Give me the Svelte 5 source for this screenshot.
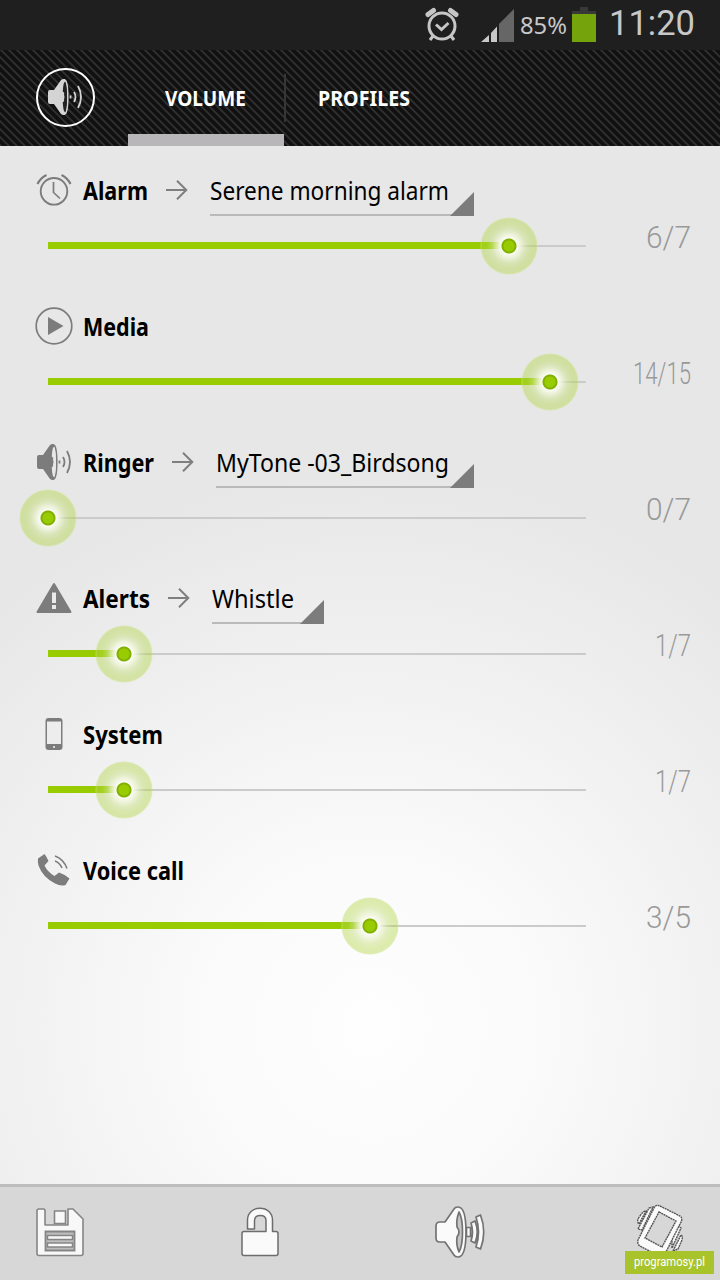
<script>
	const volumes = [
		{ icon: 'alarm', name: 'Alarm', level: 6, max: 7, tone: 'Serene morning alarm', labelWidth: 65, toneWidth: 239, countWidth: 45 },
		{ icon: 'media', name: 'Media', level: 14, max: 15, labelWidth: 66, countWidth: 58 },
		{ icon: 'speaker', name: 'Ringer', level: 0, max: 7, tone: 'MyTone -03_Birdsong', labelWidth: 71, toneWidth: 233, countWidth: 45 },
		{ icon: 'alert', name: 'Alerts', level: 1, max: 7, tone: 'Whistle', labelWidth: 67, toneWidth: 82, countWidth: 36 },
		{ icon: 'phone', name: 'System', level: 1, max: 7, labelWidth: 80, countWidth: 36 },
		{ icon: 'call', name: 'Voice call', level: 3, max: 5, labelWidth: 101, countWidth: 45 }
	];

	const trackWidth = 538;

	let tab = $state('VOLUME');

	function position(v) {
		return Math.floor((v.level / v.max) * trackWidth);
	}
</script>

{#snippet fitted(text, width, height, baseline, cls)}
	<svg class={cls} {width} {height}>
		<text x="0" y={baseline} textLength={width} lengthAdjust="spacingAndGlyphs">{text}</text>
	</svg>
{/snippet}

{#snippet speaker()}
	<path d="M0 13q0-2 2-2h4L13 1q1-1 3-1h1v36h-1q-2 0-3-1L6 25H2q-2 0-2-2z" fill="currentColor" />
	<ellipse cx="16.5" cy="18" rx="3.3" ry="17" fill="none" stroke="currentColor" stroke-width="1.5" />
	<ellipse cx="16.8" cy="18" rx="2.2" ry="15" class="hole" />
	<path d="M13 12c3.500 1 3.500 2 3 3.500q1 2.500 0 5c.5 1.500 0 2.500-3 3.500z" fill="currentColor" />
	<path d="M22.5 16.5v3M26 13q3 5 0 10M30 7q6 11 0 22" fill="none" stroke="currentColor" stroke-width="1.8" />
{/snippet}

{#snippet rowIcon(name)}
	<svg class="icon" width="38" height="38" viewBox="0 0 38 38">
		{#if name === 'alarm'}
			<g fill="none" stroke="currentColor" stroke-width="1.9">
				<circle cx="19" cy="20.3" r="13.3" />
				<path d="M18.5 11v10.5l6.5 6" stroke-width="1.7" />
				<path d="M2.5 13q3-6 9-9M35.500 13q-3-6-9-9" stroke-width="2.2" />
			</g>
		{:else if name === 'media'}
			<circle cx="19" cy="19" r="17.8" fill="none" stroke="currentColor" stroke-width="1.7" />
			<path d="M13 10v18l15.500-9z" fill="currentColor" />
		{:else if name === 'speaker'}
			<g transform="translate(2 1)">{@render speaker()}</g>
		{:else if name === 'alert'}
			<path d="M19 5 35.500 33H2.500z" fill="currentColor" stroke="currentColor" stroke-width="2" stroke-linejoin="round" />
			<path d="M17 13.500h4v10.500h-4zM17 26h4v4h-4z" fill="#eaeaea" />
		{:else if name === 'phone'}
			<rect x="10.5" y="3" width="17" height="32" rx="3" fill="currentColor" />
			<path d="M12 6.500h14V29H12z" fill="#ededed" />
			<circle cx="19" cy="32" r="1.1" fill="#ededed" />
		{:else}
			<path d="M3 7.500 9.500 3q2 2.500 4 7l-4 4.500q3 6.500 10 10.500l4.500-3.500q5 1.500 10.500 6l-4 6.500q-4.500 1.500-10.500-1.500Q7.500 26 3.500 14.500 2.500 11 3 7.500z" fill="currentColor" />
			<path d="M20 10q5 2 7 7M20 5q8.500 3 12 12.500" fill="none" stroke="currentColor" stroke-width="1.5" />
		{/if}
	</svg>
{/snippet}

<div class="screen">
	<div class="status">
		<svg width="34" height="36" viewBox="0 0 34 36" fill="none" stroke="#c6c6c6">
			<circle cx="17" cy="20" r="13" stroke-width="3" />
			<path d="M11 18.500l5.500 5 7-6.500" stroke-width="3" />
			<path d="M3 8.500 8.500 4.500M31 8.500 25.500 4.500" stroke-width="5" stroke-linecap="round" />
			<path d="M8 30l-3 4M26 30l3 4" stroke-width="3" />
		</svg>
		<svg class="signal" width="33" height="33" viewBox="0 0 33 33">
			<path d="M0 33 8 26v7zM10 24l6-6.500V33h-6z" fill="#c8c8c8" />
			<path d="M18 15 33 0v33H18z" fill="#666" />
		</svg>
		{@render fitted('85%', 47, 30, 25, 'percent')}
		<svg class="battery" width="24" height="35" viewBox="0 0 24 35">
			<path d="M8 0h8v4h8v4H0V4h8z" fill="#383838" />
			<path d="M0 7h24v28H0z" fill="#74a30c" />
		</svg>
		{@render fitted('11:20', 86, 44, 33, 'clock')}
	</div>

	<header>
		<div class="logo">
			<svg width="35" height="37" viewBox="0 0 35 37">{@render speaker()}</svg>
		</div>
		<nav>
			<button class:active={tab === 'VOLUME'} onclick={() => (tab = 'VOLUME')}>
				{@render fitted('VOLUME', 81, 30, 22.5, 'tab')}
			</button>
			<span class="divider"></span>
			<button class:active={tab === 'PROFILES'} onclick={() => (tab = 'PROFILES')}>
				{@render fitted('PROFILES', 92, 30, 22.5, 'tab')}
			</button>
		</nav>
	</header>

	<main>
		{#each volumes as v}
			<section>
				<div class="heading">
					{@render rowIcon(v.icon)}
					{@render fitted(v.name, v.labelWidth, 38, 28.5, 'label')}
					{#if v.tone}
						<svg class="arrow" width="22" height="20" viewBox="0 0 22 20" fill="none" stroke="#7f7f7f" stroke-width="2">
							<path d="M0 10h20M11 .8 20.300 10 11 19.200" />
						</svg>
						<div class="tone">
							{@render fitted(v.tone, v.toneWidth, 38, 28.5, 'tone-name')}
							<span class="corner"></span>
						</div>
					{/if}
				</div>
				<div class="control">
					<div class="track">
						<div class="fill" style="width: {position(v)}px"></div>
						<div class="thumb" style="left: {position(v)}px"></div>
					</div>
					{@render fitted(`${v.level}/${v.max}`, v.countWidth, 36, 30, 'count')}
				</div>
			</section>
		{/each}
	</main>

	<footer>
		<svg width="48" height="54" viewBox="0 0 48 54" fill="#f8f8f8" stroke="#858585" stroke-width="1.6">
			<path d="M3 4h4.500q1.500 0 1.500 1.500V20h23V4h5l10 10v34.500q0 2-2 2H3q-2 0-2-2V6q0-2 2-2z" stroke-linejoin="round" />
			<path d="M18.500 6h11v12.500h-11z" />
			<path d="M9.500 26.500h29v19h-29z" fill="#bdbdbd" stroke-width="1.8" />
			<path d="M11.500 30.500h25v4h-25zM11.500 38h25v4h-25z" stroke-width="1.5" />
		</svg>
		<svg width="48" height="54" viewBox="-1 0 48 54" fill="#fafafa" stroke="#6d6d6d" stroke-width="1.5">
			<path d="M11.500 24V15C11.500 8 17 3.200 24 3.200S36.500 8 36.500 15v11.500H40q2 0 2 2V48.500q0 2-2 2H8q-2 0-2-2V28.500q0-2 2-2h22V15.500q0-5-5.700-5T18.500 15.500V24z" stroke-linejoin="round" />
		</svg>
		<svg width="50" height="54" viewBox="0 0 50 54" fill="#fafafa" stroke="#737373" stroke-width="1.7" stroke-linejoin="round">
			<path d="M1 21q0-4 4-4h5L19 4q1-2 4-2 8 0 8 25t-8 25q-3 0-4-2L10 37H5q-4 0-4-4z" />
			<path d="M24 7q-3 8-2 15 4 5 0 10-1 8 2 15 3.500-6 3.500-20T24 7z" fill="#c6c6c6" />
			<path d="M31.500 22.500h4v9h-4zM36 18l4-2q4.500 11 0 22l-4-2q3-9 0-18zM41 12l4.500-2q6.500 17 0 34L41 42q5-15 0-30z" />
		</svg>
		<svg width="48" height="54" viewBox="0 0 48 54" fill="#fafafa" stroke="#555" stroke-width="1.4">
			<g stroke-dasharray="2 .6">
				<path d="M4 11q3-5 6-5L3 19q-3-3 1-8zM13 3l4-1L6 25l-4-1zM37 46l8-16q2 1 1 5l-4 9zM36 33l6-12 3 2-9 20z" />
				<path d="M24 1 44 11q3 2 1 6L29 49q-2 4-6 2L4 41q-3-2-2-6L18 3q2-4 6-2z" />
				<path d="M23 7 40 16 26 42 9 33z" fill="#d7d7d7" />
			</g>
		</svg>
		<div class="badge">{@render fitted('programosy.pl', 71, 23, 15, 'site')}</div>
	</footer>
</div>

<style>
	:global(body) {
		margin: 0;
	}

	.screen {
		display: flex;
		flex-direction: column;
		width: 720px;
		height: 1280px;
		overflow: hidden;
		font-family: "Noto Sans", "Open Sans", sans-serif;
	}

	svg {
		display: block;
		flex: none;
		overflow: visible;
	}

	.status {
		display: flex;
		box-sizing: border-box;
		height: 50px;
		padding: 6px 25px 0 0;
		justify-content: flex-end;
		background: #1f1f1f;
	}

	.signal {
		margin: 3px 6px 0 22px;
	}

	.percent {
		margin-top: 3px;
		fill: #c8c8c8;
		font-size: 24px;
	}

	.battery {
		margin: 1px 13px 0 5px;
	}

	.clock {
		margin-top: -4px;
		fill: #c8c8c8;
		font-family: Roboto, sans-serif;
		font-size: 35px;
	}

	header {
		display: flex;
		height: 96px;
		background: linear-gradient(45deg, #313131 0 5%, #111 10% 40%, #313131 45% 55%, #111 60% 90%, #313131 95%) 1px 0 / 8px 8px;
	}

	.logo {
		display: flex;
		box-sizing: border-box;
		width: 59px;
		height: 59px;
		margin: 18px 33px 0 36px;
		align-items: center;
		justify-content: center;
		border: 2px solid #fff;
		border-radius: 50%;
		color: #d4d4d4;
	}

	.hole {
		fill: #e8e8e8;
	}

	.logo .hole {
		fill: #222;
	}

	nav {
		display: flex;
	}

	button {
		display: flex;
		box-sizing: border-box;
		width: 156px;
		height: 96px;
		padding: 0;
		align-items: center;
		justify-content: center;
		border: 0 solid #b9b6b9;
		background: none;
		font-family: inherit;
		cursor: pointer;
	}

	button.active {
		padding: 12px 2px 0 0;
		border-bottom-width: 12px;
	}

	.tab {
		fill: #fff;
		font-size: 21px;
		font-weight: 700;
	}

	.divider {
		width: 2px;
		height: 48px;
		margin-top: 24px;
		background: #363636;
	}

	main {
		flex: 1;
		padding-top: 25px;
		background: radial-gradient(circle at 370px 880px, #fefefe 0, #fafafa 180px, #e7e7e7 560px);
	}

	section {
		height: 136px;
	}

	.heading {
		display: flex;
		height: 38px;
		padding-left: 35px;
	}

	.icon {
		margin-right: 10px;
		color: #7c7c7c;
	}

	.label {
		font-size: 25px;
		font-weight: 700;
	}

	.arrow {
		margin: 9px 22px 0 18px;
	}

	.tone {
		display: flex;
		box-sizing: border-box;
		height: 45px;
		border-bottom: 2px solid #bababa;
	}

	.tone-name {
		font-size: 25px;
	}

	.corner {
		width: 24px;
		height: 24px;
		margin: 21px 0 0 1px;
		background: #7c7c7c;
		clip-path: polygon(100% 0, 100% 100%, 0 100%);
	}

	section:nth-child(4) .corner {
		margin-left: 6px;
	}

	.control {
		display: flex;
		padding: 9px 29px 0 48px;
		justify-content: space-between;
	}

	.track {
		position: relative;
		width: 538px;
		height: 2px;
		margin-top: 27px;
		background: #cbcbcb;
	}

	.fill {
		position: relative;
		top: -3px;
		height: 7px;
		background: #9c0;
	}

	.thumb {
		position: absolute;
		top: -28px;
		width: 58px;
		height: 58px;
		margin-left: -29px;
		border-radius: 50%;
		background: radial-gradient(circle closest-side, #9c0 0 5px, #82b000 6px 7px, #fafcf2 8px, rgba(244, 248, 230, 0.9) 10px, rgba(205, 226, 145, 0.55) 17px, rgba(178, 214, 70, 0.42) 22px, rgba(175, 212, 60, 0.42) 27px, rgba(205, 228, 140, 0.6) 28px, transparent 29px);
	}

	.count {
		fill: #999;
		font-family: Roboto, sans-serif;
		font-size: 31px;
		font-weight: 300;
	}

	footer {
		position: relative;
		display: flex;
		box-sizing: border-box;
		height: 96px;
		padding: 18px 36px 0;
		justify-content: space-between;
		border-top: 3px solid #bdbdbd;
		background: #d7d7d7;
	}

	.badge {
		position: absolute;
		right: 6px;
		bottom: 6px;
		box-sizing: border-box;
		width: 89px;
		height: 23px;
		padding-left: 9px;
		background: #a8c42a;
	}

	.site {
		fill: #fff;
		font-family: Roboto, sans-serif;
		font-size: 13px;
	}
</style>
